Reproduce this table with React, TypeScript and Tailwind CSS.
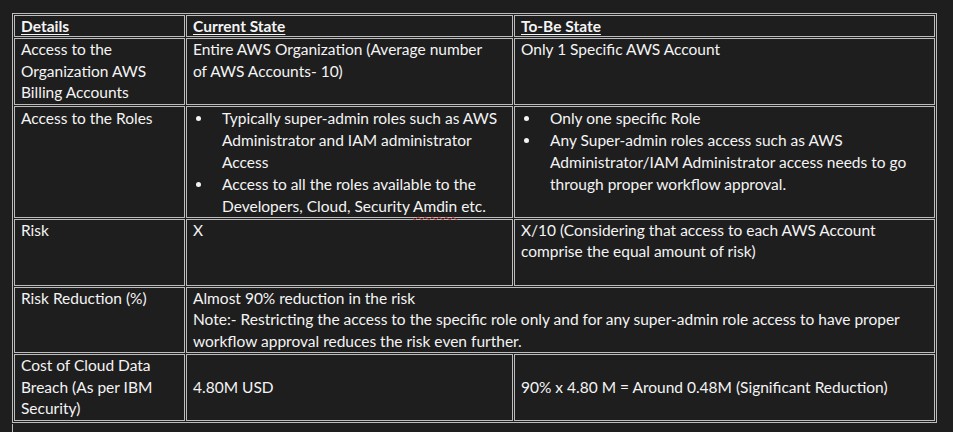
const cell = 'border border-[#bcbcbc] px-[6px] align-top';

const Bullets = ({ items }: { items: React.ReactNode[] }) => (
  <div>
    {items.map((item, i) => (
      <div key={i} className="flex">
        <div className="w-[29px] shrink-0 pl-[3px] pt-[9px]">
          <div className="w-[5px] h-[5px] rounded-full bg-[#f4f4f4]" />
        </div>
        <div>{item}</div>
      </div>
    ))}
  </div>
);

const App = () => {
  return (
    <div
      className="min-h-screen h-[432px] overflow-hidden bg-[#1e1e1e] text-[#f4f4f4] pt-[13px]"
      style={{ fontFamily: 'Lato, "Open Sans", sans-serif' }}
    >
      <table className="ml-[12px] w-[925px] table-fixed border-separate border-spacing-[1px] border border-[#bcbcbc] text-[15.5px] leading-[21.5px]">
        <colgroup>
          <col className="w-[171px]" />
          <col className="w-[327px]" />
          <col className="w-[421px]" />
        </colgroup>
        <tbody>
          <tr>
            <td className={`${cell} h-[22px] font-bold leading-[20px]`}>
              <span className="underline decoration-1 underline-offset-[2px]">Details</span>
            </td>
            <td className={`${cell} h-[22px] font-bold leading-[20px]`}>
              <span className="underline decoration-1 underline-offset-[2px]">Current State</span>
            </td>
            <td className={`${cell} h-[22px] font-bold leading-[20px]`}>
              <span className="underline decoration-1 underline-offset-[2px]">To-Be State</span>
            </td>
          </tr>
          <tr>
            <td className={`${cell} h-[65px]`}>
              Access to the Organization AWS Billing Accounts
            </td>
            <td className={`${cell} h-[65px]`}>
              Entire AWS Organization (Average number
              <br />
              of AWS Accounts- 10)
            </td>
            <td className={`${cell} h-[65px]`}>Only 1 Specific AWS Account</td>
          </tr>
          <tr>
            <td className={`${cell} h-[112px] leading-[22px]`}>Access to the Roles</td>
            <td className={`${cell} h-[112px] leading-[22px]`}>
              <Bullets
                items={[
                  'Typically super-admin roles such as AWS Administrator and IAM administrator Access',
                  <>
                    Access to all the roles available to the Developers, Cloud, Security{' '}
                    <span className="underline decoration-wavy decoration-[#d23a3a] decoration-1 underline-offset-[4px]">
                      Amdin
                    </span>{' '}
                    etc.
                  </>,
                ]}
              />
            </td>
            <td className={`${cell} h-[112px] leading-[22px]`}>
              <Bullets
                items={[
                  'Only one specific Role',
                  'Any Super-admin roles access such as AWS Administrator/IAM Administrator access needs to go through proper workflow approval.',
                ]}
              />
            </td>
          </tr>
          <tr>
            <td className={`${cell} h-[67px]`}>Risk</td>
            <td className={`${cell} h-[67px]`}>X</td>
            <td className={`${cell} h-[67px]`}>
              X/10 (Considering that access to each AWS Account comprise the equal amount of risk)
            </td>
          </tr>
          <tr>
            <td className={`${cell} h-[66px]`}>Risk Reduction (%)</td>
            <td className={`${cell} h-[66px]`} colSpan={2}>
              Almost 90% reduction in the risk
              <br />
              Note:- Restricting the access to the specific role only and for any super-admin role access to have proper
              workflow approval reduces the risk even further.
            </td>
          </tr>
          <tr>
            <td className={`${cell} h-[66px] !align-middle`}>
              Cost of Cloud Data Breach (As per IBM Security)
            </td>
            <td className={`${cell} h-[66px] !align-middle`}>4.80M USD</td>
            <td className={`${cell} h-[66px] !align-middle`}>
              90% x 4.80 M = Around 0.48M (Significant Reduction)
            </td>
          </tr>
        </tbody>
      </table>
      <div className="ml-[12px] mt-[1px] h-[14px] border-l border-[#bcbcbc]" />
    </div>
  );
};

export default App;
